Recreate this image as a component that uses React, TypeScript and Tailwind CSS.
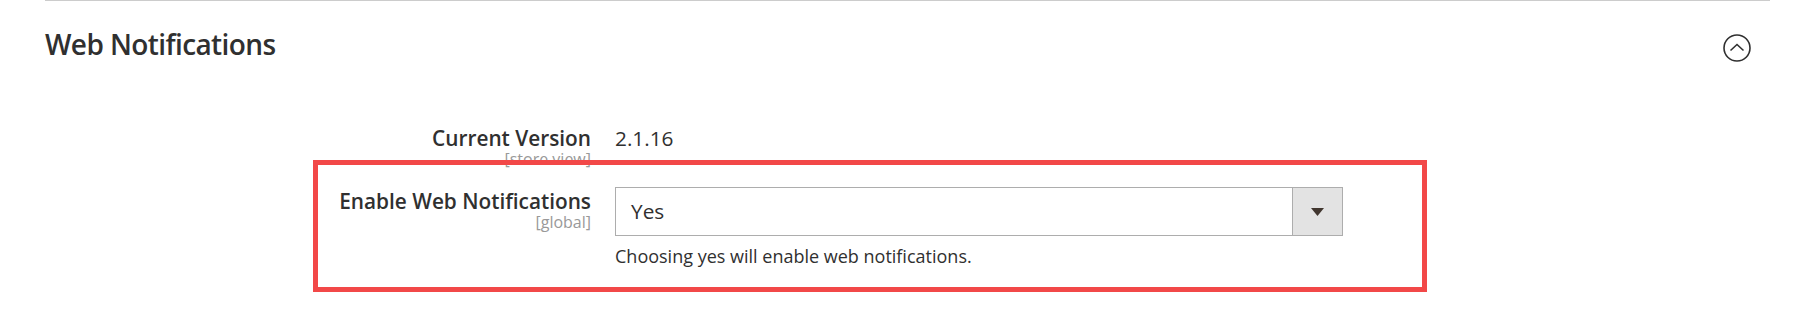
import React from "react";

function CollapseIcon() {
    return (
        <svg width="28" height="28" viewBox="0 0 28 28" fill="none">
            <circle cx="14" cy="14" r="13" stroke="#303030" strokeWidth="1.6" />
            <path d="M7.5 16.5 L14 10.5 L20.5 16.5" stroke="#303030" strokeWidth="1.6" />
        </svg>
    );
}

export default function App() {
    return (
        <div
            className="relative w-[1806px] h-[318px] overflow-hidden bg-white text-[#303030]"
            style={{ fontFamily: '"Open Sans", "Noto Sans", sans-serif' }}
        >
            <div className="ml-[45px] w-[1725px] border-t border-[#cccccc]">
                <div className="flex items-start justify-between pt-[24px]">
                    <h2 className="text-[28px] leading-[38px] font-semibold tracking-[-0.6px] text-[#303030]">
                        Web Notifications
                    </h2>
                    <div className="mt-[9px] mr-[19px]">
                        <CollapseIcon />
                    </div>
                </div>

                <div className="mt-[61px] flex">
                    <div className="w-[546px] flex flex-col items-end">
                        <span className="text-[20.8px] leading-[29px] font-semibold">
                            Current Version
                        </span>
                        <span className="text-[16px] leading-[13px] text-[#999999]">
                            [store view]
                        </span>
                    </div>
                    <div className="ml-[24px] text-[20.8px] leading-[29px]">2.1.16</div>
                </div>

                <div className="relative mt-[21px] flex">
                    <div className="pointer-events-none absolute left-[268px] top-[-27px] w-[1114px] h-[132px] border-[5px] border-[#f24848]" />
                    <div className="w-[546px] flex flex-col items-end">
                        <span className="text-[20.8px] leading-[29px] font-semibold">
                            Enable Web Notifications
                        </span>
                        <span className="text-[16px] leading-[13px] text-[#999999]">
                            [global]
                        </span>
                    </div>
                    <div className="ml-[24px] flex flex-col">
                        <div className="flex w-[728px] h-[49px] border border-[#adadad] bg-white">
                            <div className="flex-1 flex items-center pl-[15px] text-[20.8px] leading-[29px]">
                                Yes
                            </div>
                            <div className="w-[50px] flex items-center justify-center bg-[#e3e3e3] border-l border-[#adadad]">
                                <svg width="13" height="8" viewBox="0 0 13 8">
                                    <path d="M0 0 H13 L6.5 8 Z" fill="#41362f" />
                                </svg>
                            </div>
                        </div>
                        <div className="mt-[8px] text-[18px] leading-[24.5px]">
                            Choosing yes will enable web notifications.
                        </div>
                    </div>
                </div>
            </div>
        </div>
    );
}
